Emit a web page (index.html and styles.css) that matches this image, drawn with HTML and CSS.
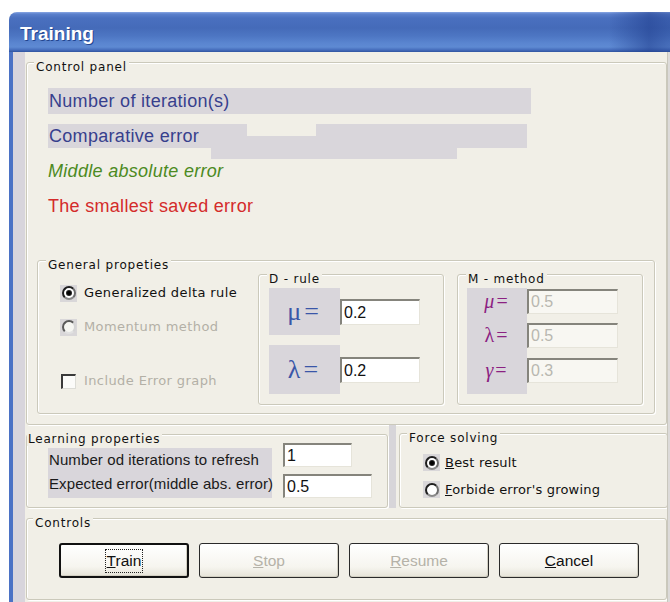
FILE: index.html
```html
<!DOCTYPE html>
<html lang="en">
<head>
<meta charset="utf-8">
<title>Training</title>
<link rel="stylesheet" href="styles.css">
</head>
<body>
<div class="window">
  <div class="titlebar"><span class="title">Training</span></div>
  <div class="frame">
    <div class="rail"></div>
    <div class="client">

      <section class="group control-panel">
        <div class="group-title">Control panel</div>
        <div class="metric metric-iter">Number of iteration(s)</div>
        <div class="metric-comp">
          <div class="metric comp-main">Comparative error</div>
          <div class="comp-notch"></div>
          <div class="comp-tail"></div>
        </div>
        <div class="comp-under"></div>
        <div class="status status-mae">Middle absolute error</div>
        <div class="status status-min">The smallest saved error</div>

        <section class="group general">
          <div class="group-title">General propeties</div>
          <div class="general-body">
            <div class="options">
              <div class="option opt-first"><span class="mark-box"><span class="radio checked"></span></span>Generalized delta rule</div>
              <div class="option opt-second disabled"><span class="mark-box"><span class="radio"></span></span>Momentum method</div>
              <div class="option opt-check disabled"><span class="mark-box plain"><span class="checkbox"></span></span>Include Error graph</div>
            </div>

            <section class="group sub">
              <div class="group-title title-d">D - rule</div>
              <div class="param param-mu"><span class="sym">μ=</span><span class="field">0.2</span></div>
              <div class="param param-lambda"><span class="sym sym-tall">λ=</span><span class="field">0.2</span></div>
            </section>

            <section class="group sub m-box">
              <div class="group-title title-m">M - method</div>
              <div class="mgrid">
                <span class="msym msym-first"><i>μ</i>=</span><span class="field field-m off field-first">0.5</span>
                <span class="msym">λ=</span><span class="field field-m off">0.5</span>
                <span class="msym"><i>γ</i>=</span><span class="field field-m off">0.3</span>
              </div>
            </section>
          </div>
        </section>
      </section>

      <div class="lower">
        <section class="group learning">
          <div class="group-title title-learn">Learning properties</div>
          <div class="learning-body">
            <div class="learn-labels">
              <div>Number od iterations to refresh</div>
              <div>Expected error(middle abs. error)</div>
            </div>
            <div class="learn-fields">
              <span class="field field-short">1</span>
              <span class="field field-long">0.5</span>
            </div>
          </div>
        </section>
        <div class="splitter"></div>
        <section class="group force">
          <div class="group-title">Force solving</div>
          <div class="force-body">
            <div class="option force-opt"><span class="mark-box"><span class="radio checked"></span></span><span><u>B</u>est result</span></div>
            <div class="option force-opt"><span class="mark-box"><span class="radio"></span></span><span><u>F</u>orbide error's growing</span></div>
          </div>
        </section>
      </div>

      <section class="group controls">
        <div class="group-title title-ctrl">Controls</div>
        <div class="buttons">
          <button class="btn btn-default"><span class="focus"><u>T</u>rain</span></button>
          <button class="btn" disabled><span><u>S</u>top</span></button>
          <button class="btn" disabled><span><u>R</u>esume</span></button>
          <button class="btn"><span><u>C</u>ancel</span></button>
        </div>
      </section>

    </div>
    <div class="rail rail-right"></div>
  </div>
</div>
</body>
</html>
```

FILE: styles.css
```css
* { box-sizing: border-box; }

html, body { margin: 0; padding: 0; }

body {
  width: 670px;
  height: 602px;
  overflow: hidden;
  background: #ffffff;
  font-family: "DejaVu Sans", sans-serif;
}

/* ---------- window chrome ---------- */
.window {
  margin: 12px 0 0 9px;
  width: 690px;
  height: 590px;
  display: flex;
  flex-direction: column;
  border-radius: 8px 8px 0 0;
  overflow: hidden;
  background: #f1efe7;
}

.titlebar {
  flex: none;
  height: 40px;
  padding: 4px 0 0 11px;
  background:
    linear-gradient(to right, rgba(30, 60, 140, 0) 600px, rgba(30, 60, 140, .55) 640px, rgba(30, 60, 140, .35) 660px),
    linear-gradient(#8aa8e4 0, #5b80cc 2px, #4a70bf 6px, #456bb9 16px, #4d76c3 24px, #5a85d0 31px, #5e8ad3 35px, #456cbb 38px, #2f549f 40px);
}

.title {
  font: bold 19px/36px "Liberation Sans", Arial, sans-serif;
  color: #ffffff;
  text-shadow: 1px 1px 0 #23458f;
}

.frame {
  flex: 1;
  display: flex;
  border-left: 4px solid #4b72c5;
}

.rail {
  flex: none;
  width: 12px;
  background: #d8d5dc;
}

.rail-right {
  width: 30px;
  background: #dcdad9;
  border-left: 1px solid #c9c7bd;
}

.client {
  flex: none;
  width: 642px;
  padding-top: 10px;
}

/* ---------- group boxes ---------- */
.group {
  border: 1px solid #cbc9bb;
  border-radius: 3px;
  box-shadow: inset 1px 1px 0 #ffffff, 1px 1px 0 #ffffff;
}

.group-title {
  display: table;
  margin: -3px 0 0 7px;
  padding: 0 2px;
  background: #f1efe7;
  font: 12px/14px "DejaVu Sans", sans-serif;
  letter-spacing: .8px;
  color: #111111;
}

.control-panel {
  margin-left: 1px;
  width: 641px;
  height: 363px;
}

/* ---------- metric labels ---------- */
.metric {
  height: 26px;
  padding-left: 1px;
  background: #d9d6db;
  font: 18px/26px "Liberation Sans", Arial, sans-serif;
  letter-spacing: .3px;
  color: #373f8d;
  white-space: nowrap;
}

.metric-iter {
  width: 483px;
  margin: 14px 0 0 21px;
}

.metric-comp {
  display: flex;
  align-items: flex-end;
  height: 24px;
  margin: 10px 0 0 21px;
}

.comp-main {
  width: 199px;
  height: 24px;
  line-height: 24px;
}

.comp-notch {
  width: 69px;
  height: 12px;
  background: #d9d6db;
}

.comp-tail {
  width: 211px;
  height: 24px;
  background: #d9d6db;
}

.comp-under {
  width: 246px;
  height: 11px;
  margin-left: 184px;
  background: #d9d6db;
}

.status {
  margin-left: 21px;
  font: 18px/24px "Liberation Sans", Arial, sans-serif;
  letter-spacing: .3px;
  white-space: nowrap;
}

.status-mae {
  font-style: italic;
  color: #4c8a22;
}

.status-min {
  margin-top: 11px;
  color: #d42b2b;
}

/* ---------- general properties ---------- */
.general {
  width: 618px;
  height: 154px;
  margin: 42px 0 0 10px;
}

.general .group-title { margin-left: 8px; }

.general-body {
  display: flex;
  margin-top: 1px;
}

.options {
  flex: none;
  width: 220px;
  padding: 8px 0 0 22px;
}

.option {
  display: flex;
  align-items: center;
  height: 24px;
  font: 13px/16px "DejaVu Sans", sans-serif;
  letter-spacing: .4px;
  color: #111111;
  white-space: nowrap;
}

.option.disabled { color: #b3b0a6; }

.opt-second { margin-top: 10px; }
.opt-check { margin-top: 30px; }

.mark-box {
  flex: none;
  width: 17px;
  height: 17px;
  margin-right: 7px;
  display: flex;
  align-items: center;
  justify-content: center;
  background: #d9d7d9;
}

.mark-box.plain { background: transparent; }

.radio {
  position: relative;
  width: 14px;
  height: 14px;
  border-radius: 50%;
  border: 2px solid;
  border-color: #1e1e1e #6c6c6c #8a8a8a #1e1e1e;
  background: #ffffff;
}

.option.disabled .radio {
  border-color: #5a5a5a #d4d4d4 #e2e2e2 #5a5a5a;
  background: #f6f6f2;
}

.radio.checked::after {
  content: "";
  position: absolute;
  left: 3px;
  top: 3px;
  width: 4px;
  height: 4px;
  border-radius: 50%;
  background: #000000;
  box-shadow: 0 0 0 1px #222222;
}

.checkbox {
  width: 15px;
  height: 15px;
  border-top: 2px solid #3a3a3a;
  border-left: 2px solid #3a3a3a;
  border-right: 1px solid #dcdcd6;
  border-bottom: 1px solid #dcdcd6;
  background: #fbfbf9;
}

/* ---------- D-rule / M-method ---------- */
.sub {
  flex: none;
  width: 186px;
  height: 131px;
  margin-top: 1px;
}

.m-box { margin-left: 13px; }

.title-m { margin-left: 6px; }

.param {
  display: flex;
  align-items: center;
  margin-left: 10px;
}

.param-mu { margin-top: 2px; }
.param-lambda { margin-top: 10px; }

.sym {
  width: 71px;
  height: 47px;
  display: flex;
  align-items: center;
  justify-content: center;
  background: #d9d6db;
  font: 26px/1 "Liberation Serif", "DejaVu Serif", serif;
  letter-spacing: 3px;
  color: #3a56a8;
}

.sym-tall { height: 49px; }

.field {
  display: block;
  width: 80px;
  height: 26px;
  padding-left: 2px;
  background: #ffffff;
  border-top: 2px solid #85847c;
  border-left: 2px solid #85847c;
  border-right: 1px solid #e6e4da;
  border-bottom: 1px solid #e6e4da;
  font: 16px/23px "Liberation Sans", Arial, sans-serif;
  color: #111111;
}

.field.off {
  background: #f8f7f2;
  color: #b9b7b0;
}

.mgrid {
  display: grid;
  grid-template-columns: 60px 91px;
  grid-template-rows: 35px 35px 36px;
  align-items: start;
  width: 151px;
  margin: 2px 0 0 9px;
  background: linear-gradient(to right, #d9d6db 60px, transparent 60px);
}

.field-m {
  width: 91px;
  height: 25px;
  line-height: 22px;
}

.field-first { margin-top: 1px; }

.msym {
  justify-self: center;
  height: 25px;
  font: 20px/25px "Liberation Serif", "DejaVu Serif", serif;
  letter-spacing: 2px;
  color: #8b2182;
}

.msym-first { margin-top: 1px; }

/* ---------- lower panels ---------- */
.lower {
  display: flex;
  align-items: flex-start;
  height: 83px;
  margin-left: 1px;
}

.learning {
  flex: none;
  width: 362px;
  height: 74px;
  margin-top: 9px;
}

.title-learn { margin-left: 0; padding-left: 1px; }

.learning-body {
  display: flex;
  margin: -3px 0 0 21px;
}

.learn-labels {
  flex: none;
  width: 224px;
  margin-top: 5px;
  padding-left: 1px;
  background: #d9d6db;
  font: 15px/24px "Liberation Sans", Arial, sans-serif;
  letter-spacing: .1px;
  color: #1a1a1a;
  white-space: nowrap;
}

.learn-fields {
  display: flex;
  flex-direction: column;
  gap: 7px;
  margin-left: 11px;
}

.field-short { width: 69px; height: 24px; line-height: 21px; }
.field-long { width: 89px; height: 24px; line-height: 21px; }

.splitter {
  flex: none;
  width: 7px;
  height: 83px;
  margin-left: 1px;
  background: #d7d5d9;
}

.force {
  flex: none;
  width: 269px;
  height: 75px;
  margin: 8px 0 0 3px;
}

.force-body {
  margin: 4px 0 0 23px;
}

.force-opt {
  height: 27px;
  letter-spacing: .2px;
}

.force-opt .mark-box { margin-right: 5px; }

/* ---------- command buttons ---------- */
.controls {
  width: 641px;
  height: 82px;
  margin: 10px 0 0 1px;
}

.title-ctrl { margin-left: 6px; }

.buttons {
  display: flex;
  gap: 10px;
  margin: 13px 0 0 32px;
}

.btn {
  flex: none;
  width: 140px;
  height: 35px;
  padding: 0;
  display: flex;
  align-items: center;
  justify-content: center;
  border: 1px solid #2a2a2a;
  border-radius: 3px;
  background: linear-gradient(#ffffff, #f6f5ef 70%, #e6e3d8);
  box-shadow: inset -1px -1px 0 #d2cfc2;
  font: 15.5px/20px "Liberation Sans", Arial, sans-serif;
  color: #111111;
}

.btn:disabled { color: #b5b2a8; }

.btn-default {
  width: 130px;
  border: 2px solid #111111;
}

.focus {
  padding: 1px 1px;
  border: 1px dotted #222222;
  line-height: 20px;
}
```
